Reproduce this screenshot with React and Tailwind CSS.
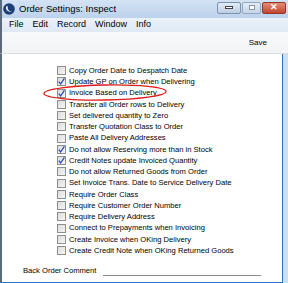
import React from "react";

const rows = [
  ["Copy Order Date to Despatch Date", false],
  ["Update GP on Order when Delivering", true],
  ["Invoice Based on Delivery", true],
  ["Transfer all Order rows to Delivery", false],
  ["Set delivered quantity to Zero", false],
  ["Transfer Quotation Class to Order", false],
  ["Paste All Delivery Addresses", false],
  ["Do not allow Reserving more than in Stock", true],
  ["Credit Notes update Invoiced Quantity", true],
  ["Do not allow Returned Goods from Order", false],
  ["Set Invoice Trans. Date to Service Delivery Date", false],
  ["Require Order Class", false],
  ["Require Customer Order Number", false],
  ["Require Delivery Address", false],
  ["Connect to Prepayments when Invoicing", false],
  ["Create Invoice when OKing Delivery", false],
  ["Create Credit Note when OKing Returned Goods", false],
];

function Box({ checked }) {
  return (
    <div className="relative w-[9px] h-[9px] border border-[#8e8f8f] bg-gradient-to-br from-[#dcdcdc] to-[#f6f6f6] shrink-0">
      {checked && (
        <svg viewBox="0 0 9 9" className="absolute left-[-1px] top-[-1px] w-[9px] h-[9px]">
          <path d="M1.8 4.6 L3.6 7 L7.4 1.4" fill="none" stroke="#2a49b6" strokeWidth="1.3" />
        </svg>
      )}
    </div>
  );
}

export default function App() {
  return (
    <div className="w-[288px] h-[283px] relative overflow-hidden bg-[#cfdff0]" style={{ fontFamily: '"Liberation Sans", Arial, sans-serif' }}>
      {/* title bar */}
      <div className="h-[18px] flex items-center bg-gradient-to-b from-[#d4e3f4] to-[#bcd2ec] border-l-2 border-[#5b6b7c]">
        <svg viewBox="0 0 12 12" className="w-[12px] h-[12px] ml-[1px]">
          <circle cx="6" cy="6" r="5.8" fill="#1c3f7a" />
          <path d="M3 3.5 C2.5 7 5 9.5 9 8.5 C6 8.3 4.2 6.5 4.8 3.2 Z" fill="#fff" />
        </svg>
        <span className="ml-[4px] text-[9.5px] text-black">Order Settings: Inspect</span>
        <div className="ml-auto flex items-center gap-[1px] mr-[2px] mt-[-3px]">
          <div className="w-[24px] h-[12px] rounded-[2px] border border-[#7f93ad] bg-gradient-to-b from-[#e3ecf7] to-[#bccde3] flex items-center justify-center">
            <div className="w-[8px] h-[3px] bg-white border border-[#444]" />
          </div>
          <div className="w-[19px] h-[12px] rounded-[2px] border border-[#95a7bd] bg-gradient-to-b from-[#e3ecf7] to-[#c6d5e8] flex items-center justify-center">
            <div className="w-[6px] h-[5px] border border-[#8a96a5] bg-white" />
          </div>
          <div className="w-[24px] h-[12px] rounded-[2px] border border-[#8d3a2c] bg-gradient-to-b from-[#e48c77] to-[#c2432b] flex items-center justify-center text-white text-[9px] font-bold leading-none">
            ✕
          </div>
        </div>
      </div>
      {/* menu bar */}
      <div className="h-[14px] flex items-center gap-[9px] pl-[7px] bg-gradient-to-b from-[#eaf1f9] to-[#dfe9f5] border-l-2 border-[#5b6b7c] text-[9px] text-black">
        <span>File</span>
        <span>Edit</span>
        <span>Record</span>
        <span>Window</span>
        <span>Info</span>
      </div>
      {/* toolbar */}
      <div className="h-[22px] flex items-center justify-end pr-[21px] bg-gradient-to-b from-[#f8f9fb] to-[#f1f3f6] border-l-2 border-[#5b6b7c] border-b border-b-[#dadde2] text-[8px] text-black">
        <span>Save</span>
      </div>
      {/* content */}
      <div className="relative h-[229px] mr-[5px] bg-white border-l-2 border-[#5b6b7c] border-r border-r-[#2d74c2] border-b border-b-[#2d74c2]">
        <div className="flex flex-col pt-[11px] pl-[55px]">
          {rows.map(([label, checked]) => (
            <div key={label} className="h-[11.25px] flex items-center gap-[3px] text-[7.6px] text-black leading-none whitespace-nowrap">
              <Box checked={checked} />
              <span>{label}</span>
            </div>
          ))}
        </div>
        <div className="flex items-end mt-[9px] pl-[21px] text-[7.6px] text-black">
          <span>Back Order Comment</span>
          <div className="ml-[7px] w-[158px] border-b border-[#8a8a8a] mb-[1px]" />
        </div>
        {/* red ellipse annotation */}
        <svg className="absolute left-0 top-0 w-[282px] h-[229px] pointer-events-none" viewBox="0 0 282 229">
          <ellipse cx="103" cy="38.5" rx="61" ry="7.5" fill="none" stroke="#e01b1b" strokeWidth="1.3" transform="rotate(-1 103 38.5)" />
        </svg>
      </div>
    </div>
  );
}
